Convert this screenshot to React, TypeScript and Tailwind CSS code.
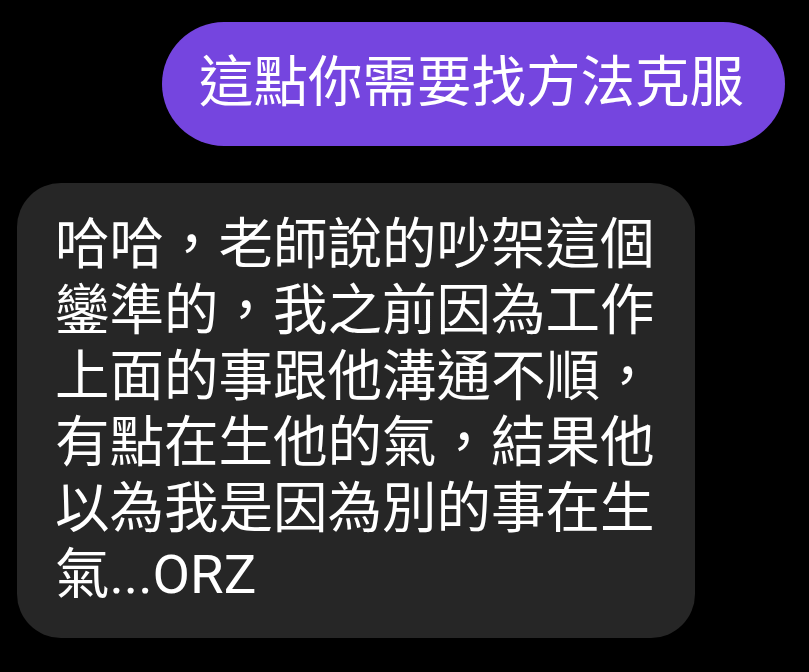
export default function App() {
  const font = { fontFamily: "Roboto, 'Noto Sans CJK TC', sans-serif" };
  return (
    <div className="w-[809px] h-[672px] bg-black overflow-hidden flex flex-col" style={font}>
      <div className="flex justify-end pr-[24px] pt-[22px]">
        <div className="w-[623px] h-[124px] rounded-full bg-[#7545df] text-white text-[54.5px] leading-[66px] pl-[37px] pt-[27px] whitespace-nowrap">
          這點你需要找方法克服
        </div>
      </div>
      <div className="pl-[17px] pt-[37px]">
        <div className="w-[678px] h-[455px] rounded-[44px] bg-[#262626] text-white text-[54.5px] leading-[66px] pl-[38px] pr-[30px] pt-[28px]">
          哈哈，老師說的吵架這個鑾準的，我之前因為工作上面的事跟他溝通不順，有點在生他的氣，結果他以為我是因為別的事在生氣...ORZ
        </div>
      </div>
    </div>
  );
}
